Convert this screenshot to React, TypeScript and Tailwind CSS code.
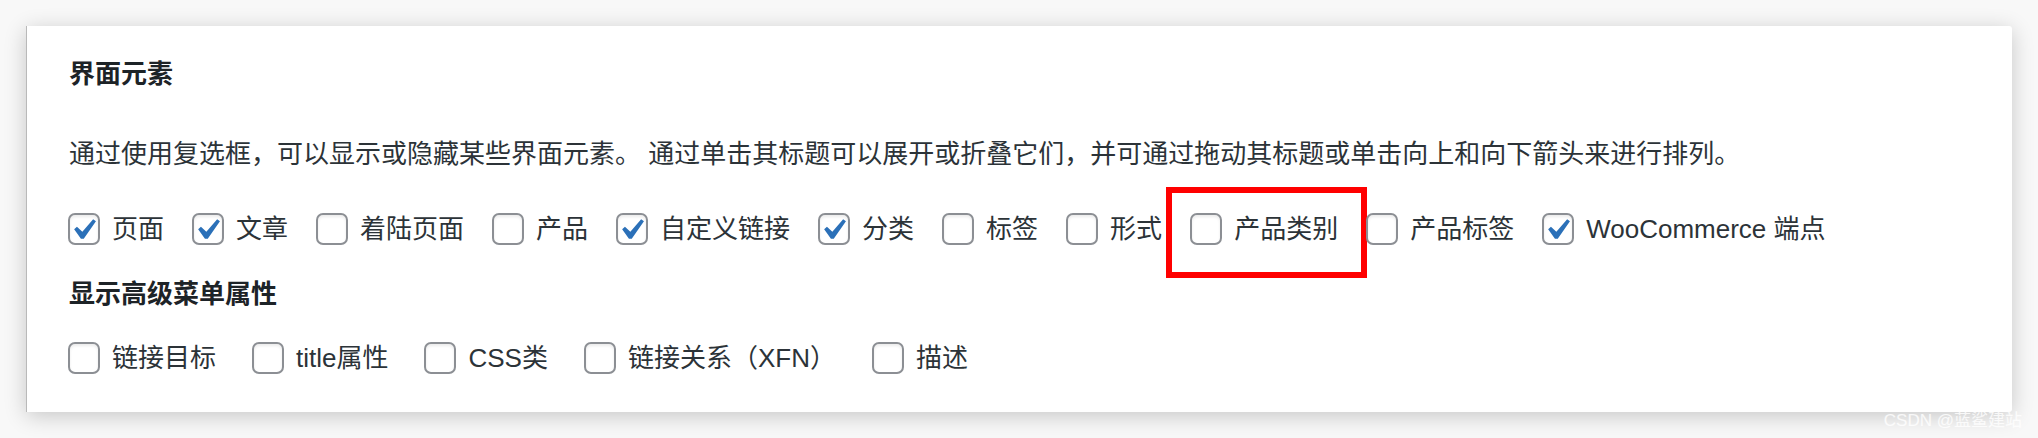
const rowOne = [
  { label: "页面", checked: true },
  { label: "文章", checked: true },
  { label: "着陆页面", checked: false },
  { label: "产品", checked: false },
  { label: "自定义链接", checked: true },
  { label: "分类", checked: true },
  { label: "标签", checked: false },
  { label: "形式", checked: false },
  { label: "产品类别", checked: false, marked: true },
  { label: "产品标签", checked: false },
  { label: "WooCommerce 端点", checked: true },
]

const rowTwo = ["链接目标", "title属性", "CSS类", "链接关系（XFN）", "描述"]

function Checkbox({ checked }: { checked: boolean }) {
  return (
    <span className="relative w-8 h-8 shrink-0 rounded-[7px] border-2 border-[#8c8f94] bg-white shadow-[inset_0_2px_3px_rgba(0,0,0,0.08)]">
      {checked && (
        <svg
          viewBox="0 0 20 20"
          className="absolute left-[-8px] top-[-6px] w-[42px] h-[42px]"
        >
          <path
            d="M14.83 4.89l1.34.94-5.81 8.38H9.02L5.78 9.67l1.34-1.25 2.57 2.4z"
            fill="#2b70b8"
          />
        </svg>
      )}
    </span>
  )
}

export default function App() {
  return (
    <div className="relative w-[2038px] h-[438px] overflow-hidden bg-[#f8f8f8] pt-[26px] pl-[26px] font-['Liberation_Sans','Noto_Sans_CJK_SC',sans-serif] text-[#2c3338]">
      <div className="w-[1986px] h-[386px] bg-white rounded-r-[3px] border-l border-[#b9b9b9] shadow-[0_4px_22px_rgba(0,0,0,0.2)] pl-[42px] pt-[28px] flex flex-col">
        <h2 className="text-[26px] leading-[40px] font-bold text-[#1d2327]">界面元素</h2>

        <p className="mt-[40px] text-[26px] leading-[40px]">
          通过使用复选框，可以显示或隐藏某些界面元素。 通过单击其标题可以展开或折叠它们，并可通过拖动其标题或单击向上和向下箭头来进行排列。
        </p>

        <div className="mt-[35px] h-[40px] flex items-center -ml-px">
          {rowOne.map((item) => (
            <div key={item.label} className="relative flex items-center gap-3 mr-[28px]">
              <Checkbox checked={item.checked} />
              <span className="text-[26px] leading-[40px] whitespace-nowrap">{item.label}</span>
              {item.marked && (
                <div className="absolute left-[-24px] top-[-22px] w-[201px] h-[91px] border-[6px] border-[#ff0000]" />
              )}
            </div>
          ))}
        </div>

        <h3 className="mt-[25px] text-[26px] leading-[40px] font-bold text-[#1d2327]">显示高级菜单属性</h3>

        <div className="mt-[24px] h-[40px] flex items-center -ml-px">
          {rowTwo.map((label) => (
            <div key={label} className="flex items-center gap-3 mr-[36px]">
              <Checkbox checked={false} />
              <span className="text-[26px] leading-[40px] whitespace-nowrap">{label}</span>
            </div>
          ))}
        </div>
      </div>

      <span className="absolute right-[16px] bottom-[9px] text-[17px] leading-none text-white/80">
        CSDN @蓝鲨建站
      </span>
    </div>
  )
}
